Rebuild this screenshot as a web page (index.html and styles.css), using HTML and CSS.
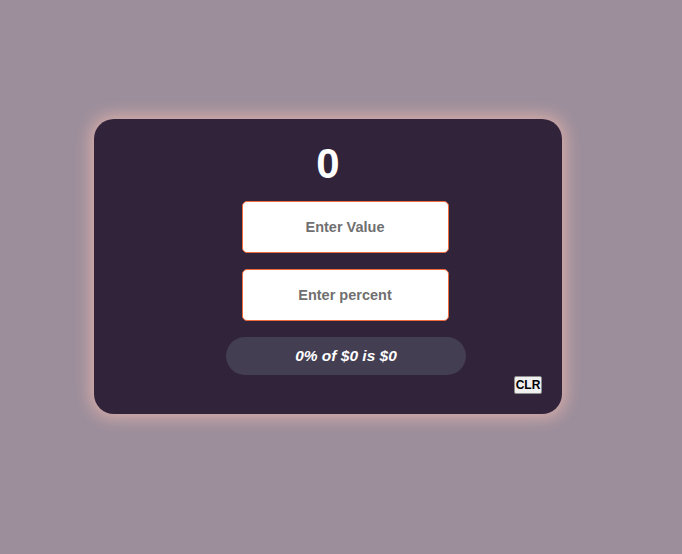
FILE: index.html
```
<!DOCTYPE html>
<html>
<head>
<meta charset="utf-8">
<link rel="stylesheet" href="styles.css">
</head>
<body>
<div class="card">
  <h1 class="total">0</h1>
  <div class="form">
    <input class="field" type="text" placeholder="Enter Value">
    <input class="field" type="text" placeholder="Enter percent">
    <div class="result">0% of $0 is $0</div>
  </div>
  <button class="clr">CLR</button>
</div>
</body>
</html>
```
FILE: styles.css
```
html, body {
  margin: 0;
  height: 100%;
}
body {
  background: #9c8e9b;
  padding: 119px 0 0 94px;
  box-sizing: border-box;
  font-family: "Liberation Sans", Arial, sans-serif;
}
.card {
  width: 468px;
  height: 295px;
  box-sizing: border-box;
  background: #31233a;
  border-radius: 20px;
  box-shadow: 0 0 16px 4px rgba(240, 185, 175, 0.7);
  padding: 21px 20px 20px 0;
  display: flex;
  flex-direction: column;
}
.total {
  margin: 0;
  font-size: 42px;
  line-height: 47px;
  font-weight: bold;
  color: #ffffff;
  text-align: center;
  padding-left: 20px;
}
.form {
  margin-top: 14px;
  display: flex;
  flex-direction: column;
  align-items: center;
  gap: 16px;
  padding-left: 56px;
}
.field {
  width: 207px;
  height: 52px;
  box-sizing: border-box;
  border: 1px solid #f06a3c;
  border-radius: 5px;
  background: #ffffff;
  text-align: center;
  font-family: "Liberation Sans", Arial, sans-serif;
  font-weight: bold;
  font-size: 14.5px;
  outline: none;
  padding: 0;
  margin-left: -2px;
}
.field::placeholder {
  color: #707070;
  opacity: 1;
}
.result {
  width: 240px;
  height: 38px;
  border-radius: 19px;
  background: #433e51;
  color: #ffffff;
  font-weight: bold;
  font-style: italic;
  font-size: 15.5px;
  display: flex;
  align-items: center;
  justify-content: center;
}
.clr {
  align-self: flex-end;
  margin-top: 1px;
  width: 28px;
  height: 18px;
  box-sizing: border-box;
  padding: 0;
  background: #efefef;
  border: 1px solid #8f8f8f;
  border-radius: 2px;
  font-family: "Liberation Sans", Arial, sans-serif;
  font-weight: bold;
  font-size: 12px;
  color: #000000;
  line-height: 16px;
}
```
